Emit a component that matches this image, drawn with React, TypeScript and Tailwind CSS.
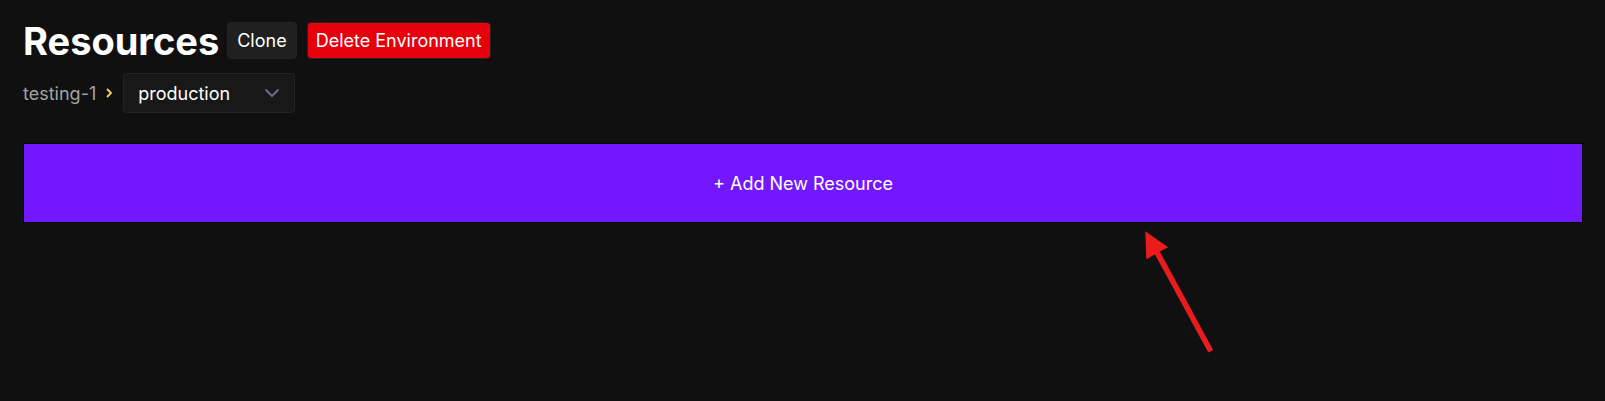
export default function App() {
  return (
    <main className="relative min-h-screen overflow-hidden bg-[#101010] pt-[22px] pr-[22px] pl-[23px] font-['Inter',sans-serif] text-lg text-white">
      <header className="flex items-center gap-2">
        <h1 className="text-[38px] leading-9 font-bold">Resources</h1>
        <div className="flex gap-[10px]">
          <button className="h-[37px] rounded border border-[#242424] bg-[#202020] px-[9px]">Clone</button>
          <button className="h-[37px] rounded border border-[#242424] bg-[#e7000b] px-2">Delete Environment</button>
        </div>
      </header>
      <nav className="mt-[14px] flex items-center text-[#a3a3a3]">
        <a href="#project" className="pt-0.5">testing-1</a>
        <svg className="mr-[5px] ml-1 size-[18px] text-[#fcd452]" viewBox="0 0 18 18" fill="none" stroke="currentColor" strokeWidth="1.8" aria-hidden="true">
          <path d="m7 5 4 4-4 4" />
        </svg>
        <div className="grid w-[172px] items-center">
          <select aria-label="Environment" className="col-start-1 row-start-1 h-10 w-full appearance-none rounded border border-[#242424] bg-[#181818] pt-0.5 pl-[14px] text-white">
            <option>production</option>
          </select>
          <svg className="pointer-events-none col-start-1 row-start-1 mr-4 h-2 w-[14px] justify-self-end text-[#6b7280]" viewBox="0 0 14 8" fill="none" stroke="currentColor" strokeWidth="1.8" strokeLinecap="round" strokeLinejoin="round" aria-hidden="true">
            <path d="m1 1 6 6 6-6" />
          </svg>
        </div>
      </nav>
      <button className="mt-[30px] h-20 w-full border border-black bg-[#7317ff] pt-0.5">+ Add New Resource</button>
      <svg className="pointer-events-none absolute top-[230px] left-[1144px] h-[124px] w-[72px]" viewBox="0 0 72 124" fill="#e81c1c" aria-hidden="true">
        <path d="M1.3 1.3 24.2 17.2 15.8 21.5 69.2 120 64.3 122.6 11 24.4 2.3 29.2Z" />
      </svg>
    </main>
  );
}
